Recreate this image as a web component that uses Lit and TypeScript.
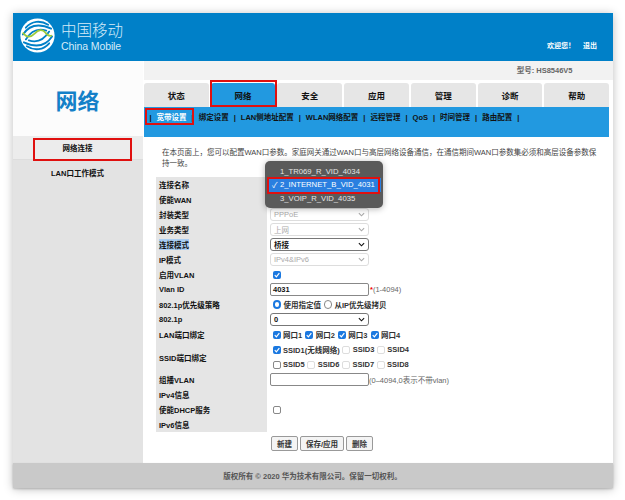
import { LitElement, html, css, svg } from "lit";
import { customElement } from "lit/decorators.js";

const tabs = ["状态", "网络", "安全", "应用", "管理", "诊断", "帮助"];
const subs = ["宽带设置", "绑定设置", "LAN侧地址配置", "WLAN网络配置", "远程管理", "QoS", "时间管理", "路由配置"];
const check = svg`<svg class="tick" viewBox="0 0 10 10"><path d="M2.2 5.2 4.2 7.3 7.9 2.6" fill="none" stroke="#fff" stroke-width="1.5"/></svg>`;

@customElement("app-root")
export class AppRoot extends LitElement {
  static styles = css`
    :host { display: block; height: 500px; overflow: hidden; background: #fff; box-sizing: border-box; padding: 13px 12px 0 12.5px;
      font-family: "Liberation Sans", "Noto Sans CJK SC", sans-serif; font-size: 7.5px; color: #111; }
    * { box-sizing: border-box; }
    .win { position: relative; width: 600px; height: 475px; display: flex; flex-direction: column; background: #fff; box-shadow: 0 1px 9px rgba(0,0,0,.26); }
    .head { height: 48px; flex: none; background: #0080c8; display: flex; justify-content: space-between; padding: 5px 15.5px 0 7.5px; color: #fff; }
    .brand { display: flex; gap: 6px; }
    .logo { width: 35px; height: 35px; flex: none; }
    .bt { display: flex; flex-direction: column; padding-top: 3px; color: #d6ebf8; width: 64px; }
    .cn { font-size: 15.5px; line-height: 19px; font-weight: 300; }
    .en { font-size: 10.5px; line-height: 12px; letter-spacing: -.1px; white-space: nowrap; }
    .user { align-self: flex-end; padding-bottom: 11px; display: flex; gap: 8px; font-weight: 700; font-size: 7px; line-height: 8px; }
    .main { flex: 1; display: flex; min-height: 0; }
    .side { width: 130px; flex: none; background: #e3e3e3; display: flex; flex-direction: column; }
    .title { height: 75px; background: #fcfcfc; color: #1480c8; font-size: 22px; font-weight: 700; display: flex; align-items: center; justify-content: center; }
    .n { height: 24px; display: flex; align-items: center; justify-content: center; font-weight: 700; }
    .n.on { background: #ececec; border-bottom: 1px solid #ddd; }
    .right { flex: 1; display: flex; flex-direction: column; min-width: 0; }
    .model { height: 19px; margin-left: 1px; background: #f2f2f2; text-align: right; padding: 5px 40px 0 0; color: #666; font-weight: 700; font-size: 7.5px; line-height: 9px; flex: none; }
    .tabs { display: flex; gap: 2px; padding-top: 3px; margin-left: 1.5px; width: 465px; flex: none; }
    .tab { flex: 1; height: 24px; background: #e6e6e6; border-radius: 3px 3px 0 0; display: flex; align-items: center; justify-content: center; font-weight: 700; font-size: 8.5px; }
    .tab.on { background: #2299e0; }
    .sub { margin-left: 1.5px; width: 465px; height: 30px; background: #2299e0; display: flex; align-items: flex-start; padding: 5px 0 0 5.5px; gap: 5px; font-weight: 700; flex: none; }
    .sub span { line-height: 11px; }
    .sub .on { color: #fff; }
    .box { position: absolute; border: 2px solid #e0100f; pointer-events: none; }
    .b1 { left: 197px; top: 67px; width: 67px; height: 27px; }
    .b2 { left: 132.5px; top: 95px; width: 49px; height: 17px; }
    .b3 { left: 20px; top: 125px; width: 99px; height: 23px; }
    .intro { margin: 9.5px 0 0 19.5px; width: 439px; line-height: 11px; color: #444; flex: none; }
    .form { margin: 8.5px 0 0 13.5px; display: grid; grid-template-columns: 111px 1fr; flex: none; width: 440px; grid-auto-rows: 15px; }
    .l { background: #e5e5e5; font-weight: 700; display: flex; align-items: center; padding-left: 3px; }
    .l.tall { grid-row: span 2; }
    .l mark { background: #a9cdf2; color: inherit; }
    .v { display: flex; align-items: center; padding-left: 3px; font-weight: 700; color: #333; white-space: nowrap; }
    .sel { width: 99px; height: 13px; border: 1px solid #777; border-radius: 3px; background: #fff; display: flex; align-items: center; justify-content: space-between; padding: 0 3px; font-weight: 700; color: #111; }
    .sel.off { border-color: #ddd; color: #aaa; font-weight: 400; }
    .sel svg { width: 7px; height: 5px; }
    .inp { width: 99px; height: 13px; border: 1px solid #888; border-radius: 2px; background: #fff; padding: 0 2px; font-weight: 700; color: #111; display: flex; align-items: center; }
    .note { color: #666; font-weight: 400; }
    .star { color: #e00; margin-left: 1px; }
    .cb { width: 8px; height: 8px; border-radius: 2px; flex: none; display: inline-flex; margin-left: 2.5px; }
    .cb + span { margin-left: 2.5px; }
    .cb.y { background: #1a78e0; }
    .cb.n { border: 1px solid #ddd; background: #fff; }
    .cb.d { border: 1px solid #888; background: #fff; }
    .tick { width: 100%; height: 100%; }
    .rd { width: 8.5px; height: 8.5px; border-radius: 50%; border: 1px solid #888; flex: none; background: #fff; margin-left: 2.5px; }
    .rd + span { margin-left: 2.5px; }
    .rd.y { border: 2.5px solid #1a78e0; }
    .g3 { margin-right: .5px; }
    .btns { margin: 4px 0 0 128.5px; display: flex; gap: 2px; flex: none; }
    .btn { height: 15px; border: 1px solid #999; border-radius: 2px; background: #f4f4f4; padding: 0 5px; display: flex; align-items: center; font-weight: 700; color: #333; }
    .foot { margin-top: auto; height: 25px; flex: none; background: #c9c9c9; display: flex; align-items: center; justify-content: center; color: #555; font-weight: 700; box-shadow: 0 1px 2px rgba(0,0,0,.2); }
    .menu { position: absolute; left: 252.5px; top: 148px; width: 118px; height: 47px; border-radius: 5px; background: #5a5a5a; color: #e4e4e4; padding: 3.5px 0 0; font-size: 7.7px; box-shadow: 0 1px 6px rgba(0,0,0,.3); }
    .mi { height: 13.5px; padding-left: 15px; display: flex; align-items: center; position: relative; white-space: nowrap; }
    .mi.on { background: #2a7fe0; color: #fff; margin: 0 2px; padding-left: 13px; }
    .mi.on::before { content: "✓"; position: absolute; left: 5px; font-size: 8px; }
    .b4 { left: 254.5px; top: 163.5px; width: 113px; height: 17px; }
  `;

  private logo() {
    return svg`<svg class="logo" viewBox="0 0 36 36">
      <circle cx="18" cy="18" r="17.6" fill="#fff"/>
      <g fill="none" stroke="#0080c8" stroke-width="1.9" stroke-linecap="round">
        <path d="M6 10C12 3 21 2 29 7"/><path d="M3 17C9 8 19 5 32 11"/>
        <path d="M6 22C11 14 18 10 27 13"/><path d="M30 26C24 33 15 34 7 29"/>
        <path d="M33 19C27 28 17 31 4 25"/><path d="M30 14C25 22 18 26 9 23"/>
      </g>
      <path d="M3 15C7 21 11 20 15 16C19 12 23 11 26 15C28 18 30 19 33 18" fill="none" stroke="#9ccb3b" stroke-width="1.8"/>
    </svg>`;
  }

  private chev(c: string) {
    return svg`<svg viewBox="0 0 8 5"><path d="M1 1 4 4 7 1" fill="none" stroke="${c}" stroke-width="1.3"/></svg>`;
  }

  private sel(t: string, off = false) {
    return html`<div class="sel ${off ? "off" : ""}"><span>${t}</span>${this.chev(off ? "#aaa" : "#111")}</div>`;
  }

  private cb(kind: string) {
    return html`<span class="cb ${kind}">${kind === "y" ? check : ""}</span>`;
  }

  render() {
    return html`<div class="win">
      <div class="head">
        <div class="brand">${this.logo()}<div class="bt"><div class="cn">中国移动</div><div class="en">China Mobile</div></div></div>
        <div class="user"><span>欢迎您！</span><span>退出</span></div>
      </div>
      <div class="main">
        <div class="side">
          <div class="title">网络</div>
          <div class="n on">网络连接</div>
          <div class="n">LAN口工作模式</div>
        </div>
        <div class="right">
          <div class="model">型号: HS8546V5</div>
          <div class="tabs">${tabs.map((t, i) => html`<div class="tab ${i === 1 ? "on" : ""}">${t}</div>`)}</div>
          <div class="sub"><span>|</span>${subs.map((s, i) => html`<span class=${i === 0 ? "on" : ""}>${s}</span><span>|</span>`)}</div>
          <div class="intro">在本页面上，您可以配置WAN口参数。家庭网关通过WAN口与高层网络设备通信，在通信期间WAN口参数集必须和高层设备参数保持一致。</div>
          <div class="form">
            <div class="l">连接名称</div><div class="v"></div>
            <div class="l">使能WAN</div><div class="v"></div>
            <div class="l">封装类型</div><div class="v">${this.sel("PPPoE", true)}</div>
            <div class="l">业务类型</div><div class="v">${this.sel("上网", true)}</div>
            <div class="l"><mark>连接模式</mark></div><div class="v">${this.sel("桥接")}</div>
            <div class="l">IP模式</div><div class="v">${this.sel("IPv4&IPv6", true)}</div>
            <div class="l">启用VLAN</div><div class="v">${this.cb("y")}</div>
            <div class="l">Vlan ID</div><div class="v"><div class="inp">4031</div><span class="star">*</span><span class="note">(1-4094)</span></div>
            <div class="l">802.1p优先级策略</div><div class="v"><span class="rd y"></span><span>使用指定值</span><span class="rd"></span><span>从IP优先级拷贝</span></div>
            <div class="l">802.1p</div><div class="v">${this.sel("0")}</div>
            <div class="l">LAN端口绑定</div><div class="v">${[1, 2, 3, 4].map((n) => html`${this.cb("y")}<span class="g3">网口${n}</span>`)}</div>
            <div class="l tall">SSID端口绑定</div>
            <div class="v">${this.cb("y")}<span>SSID1(无线网络)</span>${this.cb("n")}<span>SSID3</span>${this.cb("n")}<span>SSID4</span></div>
            <div class="v">${this.cb("d")}<span>SSID5</span>${this.cb("n")}<span>SSID6</span>${this.cb("n")}<span>SSID7</span>${this.cb("n")}<span>SSID8</span></div>
            <div class="l">组播VLAN</div><div class="v"><div class="inp"></div><span class="note">(0–4094,0表示不带vlan)</span></div>
            <div class="l">IPv4信息</div><div class="v"></div>
            <div class="l">使能DHCP服务</div><div class="v">${this.cb("d")}</div>
            <div class="l">IPv6信息</div><div class="v"></div>
          </div>
          <div class="btns"><div class="btn">新建</div><div class="btn">保存/应用</div><div class="btn">删除</div></div>
        </div>
      </div>
      <div class="foot">版权所有 © 2020 华为技术有限公司。保留一切权利。</div>
      <div class="box b1"></div><div class="box b2"></div><div class="box b3"></div>
      <div class="menu">
        <div class="mi">1_TR069_R_VID_4034</div>
        <div class="mi on">2_INTERNET_B_VID_4031</div>
        <div class="mi">3_VOIP_R_VID_4035</div>
      </div>
      <div class="box b4"></div>
    </div>`;
  }
}
